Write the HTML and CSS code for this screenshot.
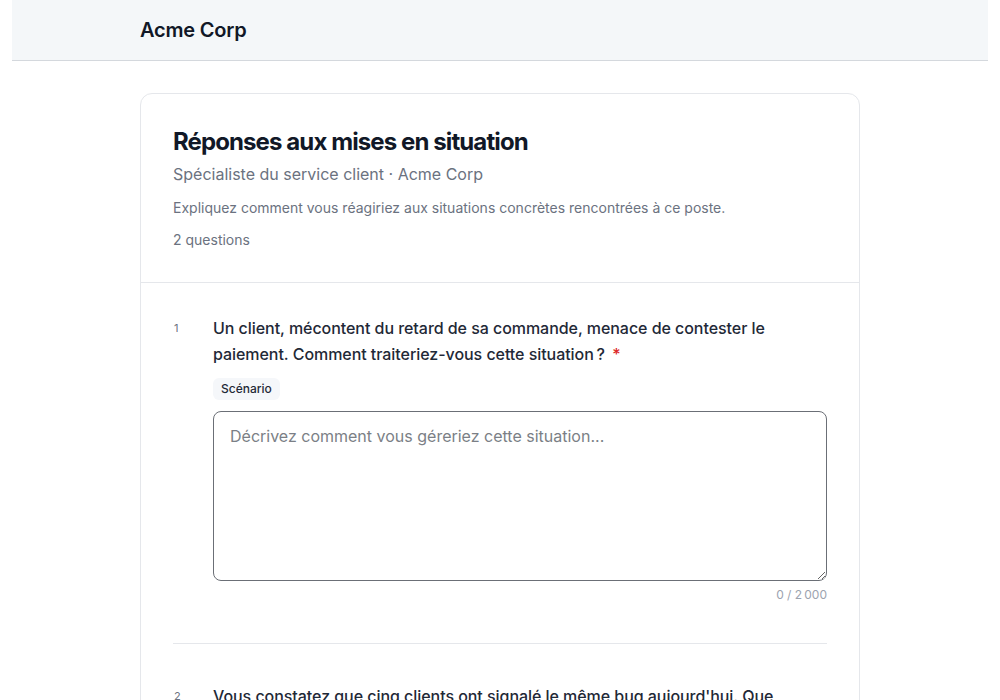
FILE: index.html
```html
<!DOCTYPE html>
<html lang="fr">
<head>
<meta charset="utf-8">
<title>Réponses aux mises en situation</title>
<link rel="stylesheet" href="styles.css">
</head>
<body>
<div class="page">
  <header class="topbar">
    <div class="brand">Acme Corp</div>
  </header>
  <main class="main">
    <section class="card">
      <div class="card-head">
        <h1 class="title">Réponses aux mises en situation</h1>
        <p class="subtitle">Spécialiste du service client · Acme Corp</p>
        <p class="desc">Expliquez comment vous réagiriez aux situations concrètes rencontrées à ce poste.</p>
        <p class="count">2 questions</p>
      </div>
      <ol class="questions">
        <li class="question">
          <span class="num">1</span>
          <div class="q-body">
            <p class="q-text">Un client, mécontent du retard de sa commande, menace de contester le paiement. Comment traiteriez-vous cette situation&#8239;? <span class="req">*</span></p>
            <span class="badge">Scénario</span>
            <textarea class="answer" placeholder="Décrivez comment vous géreriez cette situation..."></textarea>
            <div class="counter">0 / 2&#8239;000</div>
          </div>
        </li>
        <li class="question">
          <span class="num">2</span>
          <div class="q-body">
            <p class="q-text">Vous constatez que cinq clients ont signalé le même bug aujourd'hui. Que <span class="nowrap">feriez-vous</span> pour le remonter et tenir les clients informés&#8239;? <span class="req">*</span></p>
            <span class="badge">Scénario</span>
            <textarea class="answer" placeholder="Décrivez comment vous géreriez cette situation..."></textarea>
            <div class="counter">0 / 2&#8239;000</div>
          </div>
        </li>
      </ol>
    </section>
  </main>
</div>
</body>
</html>
```

FILE: styles.css
```css
* { box-sizing: border-box; }
html, body { margin: 0; padding: 0; background: #ffffff; }
body {
  font-family: Inter, "Liberation Sans", Arial, sans-serif;
  color: #111827;
}
.page { padding: 0 12px; }
.topbar {
  height: 61px;
  background: #f4f7f9;
  border-bottom: 1px solid #d4d8dd;
  display: flex;
  align-items: center;
  padding-left: 128px;
}
.brand {
  font-size: 20px;
  font-weight: 600;
  color: #111827;
  letter-spacing: -0.2px;
}
.main {
  display: flex;
  justify-content: center;
  padding-top: 32px;
}
.card {
  width: 720px;
  border: 1px solid #e5e7eb;
  border-radius: 12px;
  background: #fff;
}
.card-head {
  padding: 32px 32px 32px;
  border-bottom: 1px solid #e5e7eb;
}
.title {
  margin: 0;
  font-size: 24px;
  line-height: 32px;
  font-weight: 700;
  letter-spacing: -0.9px;
  color: #111827;
}
.subtitle {
  margin: 4px 0 0;
  font-size: 16px;
  line-height: 24px;
  color: #6b7280;
}
.desc {
  margin: 12px 0 0;
  font-size: 14px;
  line-height: 20px;
  color: #6b7280;
}
.count {
  margin: 12px 0 0;
  font-size: 14px;
  line-height: 20px;
  color: #6b7280;
}
.questions {
  list-style: none;
  margin: 0;
  padding: 32px 32px 32px;
}
.question {
  display: flex;
  padding-bottom: 40px;
  border-bottom: 1px solid #e5e7eb;
}
.question + .question { padding-top: 39px; }
.question:last-child { border-bottom: none; }
.num {
  width: 40px;
  flex: none;
  font-size: 11px;
  line-height: 26px;
  color: #6b7280;
  padding-left: 1px;
}
.q-body {
  flex: 1;
  display: flex;
  flex-direction: column;
  align-items: flex-start;
}
.q-text {
  margin: 0;
  font-size: 16px;
  line-height: 26px;
  font-weight: 500;
  color: #1f2937;
  letter-spacing: -0.05px;
}
.nowrap { white-space: nowrap; }
.req { color: #dc2626; margin-left: 3px; }
.badge {
  margin-top: 11px;
  padding: 4px 8px;
  font-size: 12px;
  line-height: 14px;
  font-weight: 500;
  color: #1f2937;
  background: #f5f7fa;
  border-radius: 6px;
}
.answer {
  margin-top: 11px;
  width: 100%;
  height: 170px;
  border: 1px solid #6b6f76;
  border-radius: 8px;
  padding: 13px 16px;
  font-family: Inter, "Liberation Sans", Arial, sans-serif;
  font-size: 16px;
  line-height: 22px;
  color: #111827;
  resize: vertical;
  background: #fff;
}
.answer::placeholder { color: #7b7f86; }
.counter {
  align-self: flex-end;
  margin-top: 6px;
  font-size: 12px;
  line-height: 16px;
  color: #9ca3af;
}
```
